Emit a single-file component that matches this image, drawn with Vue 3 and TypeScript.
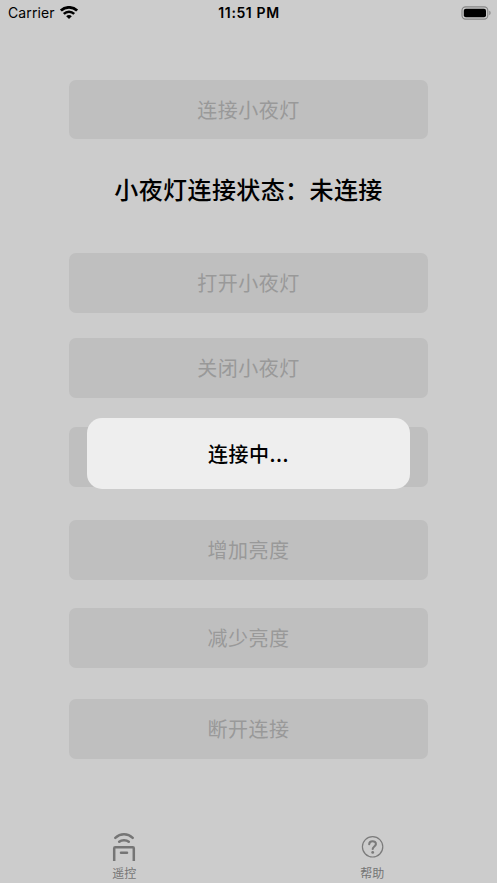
<script setup lang="ts">
interface Control {
  id: string
  label: string
}

const connection: Control = { id: 'connect', label: '连接小夜灯' }
const status = '未连接'

const controls: Control[] = [
  { id: 'on', label: '打开小夜灯' },
  { id: 'off', label: '关闭小夜灯' },
  { id: 'color', label: '' },
  { id: 'brighter', label: '增加亮度' },
  { id: 'dimmer', label: '减少亮度' },
  { id: 'disconnect', label: '断开连接' },
]
</script>

<template>
  <div class="screen">
    <header class="status-bar">
      <div class="carrier">
        <span>Carrier</span>
        <svg class="wifi" viewBox="0 0 18 13" fill="none" stroke="#000">
          <path d="M.9 4.6C5.5 .2 12.5 .2 17.1 4.6" stroke-width="2.7" />
          <path d="M3.8 7.9C6.8 5 11.2 5 14.2 7.9" stroke-width="2.5" />
          <path d="M6.2 10.2C7.8 8.6 10.2 8.6 11.8 10.2L9 13Z" fill="#000" stroke="none" />
        </svg>
      </div>
      <time class="clock">11:51 PM</time>
      <svg class="battery" viewBox="0 0 30 14">
        <rect x="1" y=".9" width="25.8" height="12.2" rx="3.6" fill="none" stroke="#858585" stroke-width="1.1" />
        <rect x="2.8" y="2.7" width="22.2" height="8.6" rx="2" fill="#000" />
        <path d="M28.3 4.8C30 5.4 30 8.6 28.3 9.2Z" fill="#858585" />
      </svg>
    </header>

    <main class="remote">
      <button class="control" disabled>{{ connection.label }}</button>
      <h1 class="title">小夜灯连接状态：{{ status }}</h1>
      <button v-for="item in controls" :key="item.id" class="control" :class="item.id" disabled>
        {{ item.label }}
      </button>
    </main>

    <nav class="tabs">
      <div class="tab">
        <svg class="tab-icon" viewBox="0 0 30 30" fill="none" stroke="#757575" stroke-width="2.5" stroke-linecap="round">
          <path d="M6.3 5.8C11.3 1.1 18.7 1.1 23.7 5.8" />
          <path d="M10.2 9.7C12.8 7.6 17.2 7.6 19.8 9.7" />
          <path d="M5.2 29V16.2Q5.2 15.2 6.2 15.2H23.8Q24.8 15.2 24.8 16.2V29" stroke-linecap="butt" />
          <path d="M12 20.7H18" />
        </svg>
        <span>遥控</span>
      </div>
      <div class="tab">
        <svg class="tab-icon" viewBox="0 0 30 30" fill="none" stroke="#7b7b7b">
          <circle cx="14.6" cy="14.8" r="10.2" stroke-width="1.2" />
          <path d="M11.2 12.3C11.3 8.2 18 8.3 17.9 12.1C17.8 14.4 14.7 14.6 14.7 17" stroke-width="2.1" stroke-linecap="round" />
          <circle cx="14.7" cy="20.4" r="1.4" fill="#7b7b7b" stroke="none" />
        </svg>
        <span class="help-label">帮助</span>
      </div>
    </nav>

    <div class="toast" role="status">连接中...</div>
  </div>
</template>

<style>
body {
  margin: 0;
  background: #ccc;
}
</style>

<style scoped>
.screen {
  position: relative;
  display: flex;
  flex-direction: column;
  box-sizing: border-box;
  width: 100%;
  height: 883px;
  overflow: hidden;
  background: #ccc;
  color: #000;
  font-family: Inter, "Noto Sans CJK SC", sans-serif;
}

.status-bar {
  display: grid;
  grid-template-columns: 1fr auto 1fr;
  align-items: center;
  flex: none;
  height: 26px;
  padding: 0 6px 0 8px;
  font-size: 14px;
  line-height: 26px;
}

.carrier {
  display: flex;
  align-items: center;
  gap: 5px;
  letter-spacing: 0.1px;
}

.wifi {
  width: 18px;
  height: 13px;
  margin-top: -1px;
}

.clock {
  font-weight: 600;
  font-size: 14px;
  letter-spacing: 0.6px;
  margin-right: 1px;
}

.battery {
  justify-self: end;
  width: 30px;
  height: 14px;
  margin-top: -1px;
}

.remote {
  display: flex;
  flex-direction: column;
  flex: 1;
  padding: 53.5px 69px 0;
}

.control {
  display: flex;
  align-items: center;
  justify-content: center;
  flex: none;
  height: 59.7px;
  margin: 0;
  padding: 0.4px 0 0;
  border: 0;
  border-radius: 7px;
  background: #bfbfbf;
  color: #999;
  font-family: "Noto Sans CJK SC", sans-serif;
  font-size: 20px;
  letter-spacing: 0.5px;
  line-height: 30px;
}

.title {
  height: 36px;
  margin: 32px -20px 45.8px;
  font-family: "Noto Sans CJK SC", sans-serif;
  font-size: 24px;
  font-weight: 500;
  line-height: 36px;
  letter-spacing: 0.4px;
  text-align: center;
  white-space: nowrap;
}

.off {
  margin-top: 25.6px;
}

.color {
  margin-top: 29px;
}

.brighter {
  margin-top: 33.6px;
}

.dimmer {
  margin-top: 28px;
}

.disconnect {
  margin-top: 31.5px;
}

.tabs {
  display: grid;
  grid-template-columns: 1fr 1fr;
  flex: none;
  height: 51px;
}

.tab {
  display: flex;
  flex-direction: column;
  align-items: center;
  color: #757575;
  font-size: 12px;
  line-height: 16px;
}

.tab-icon {
  width: 30px;
  height: 30px;
  margin-bottom: 4px;
}

.help-label {
  margin-right: 1px;
}

.toast {
  position: absolute;
  top: 418px;
  left: 87px;
  display: flex;
  align-items: center;
  justify-content: center;
  width: 323px;
  height: 71px;
  border-radius: 15px;
  background: #eee;
  font-family: "Noto Sans CJK SC", sans-serif;
  font-size: 20px;
  font-weight: 500;
  letter-spacing: 0.5px;
}
</style>
